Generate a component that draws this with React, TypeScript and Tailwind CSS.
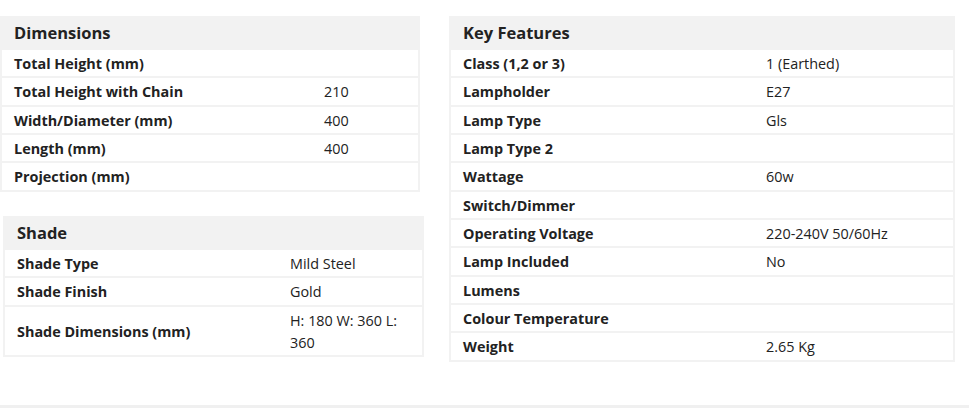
type Row = [string, string];

const dimensions: Row[] = [
  ["Total Height (mm)", ""],
  ["Total Height with Chain", "210"],
  ["Width/Diameter (mm)", "400"],
  ["Length (mm)", "400"],
  ["Projection (mm)", ""],
];

const shade: Row[] = [
  ["Shade Type", "Mild Steel"],
  ["Shade Finish", "Gold"],
  ["Shade Dimensions (mm)", "H: 180 W: 360 L: 360"],
];

const keyFeatures: Row[] = [
  ["Class (1,2 or 3)", "1 (Earthed)"],
  ["Lampholder", "E27"],
  ["Lamp Type", "Gls"],
  ["Lamp Type 2", ""],
  ["Wattage", "60w"],
  ["Switch/Dimmer", ""],
  ["Operating Voltage", "220-240V 50/60Hz"],
  ["Lamp Included", "No"],
  ["Lumens", ""],
  ["Colour Temperature", ""],
  ["Weight", "2.65 Kg"],
];

function SpecTable({
  title,
  rows,
  labelWidth,
  className,
}: {
  title: string;
  rows: Row[];
  labelWidth: string;
  className: string;
}) {
  return (
    <div className={`bg-[#f2f2f2] px-[2px] pb-[0.33px] ${className}`}>
      <div className="h-[34px] flex items-center px-[12px] pt-[1px] text-[16.5px] font-bold text-[#222]">
        {title}
      </div>
      {rows.map(([label, value]) => (
        <div
          key={label}
          className={`grid ${labelWidth} bg-white mb-[2px] min-h-[26.33px] items-center text-[14.4px] leading-[22px] text-[#222]`}
        >
          <div className="px-[12px] pt-[3px] pb-[1px] font-bold">{label}</div>
          <div className="px-[12px] pt-[3px] pb-[1px]">{value}</div>
        </div>
      ))}
    </div>
  );
}

export default function App() {
  return (
    <div className="w-[969px] bg-white" style={{ fontFamily: '"Open Sans", sans-serif' }}>
      <div className="h-[405px] pt-[16px] flex items-start">
        <div className="w-[449px] shrink-0">
          <SpecTable
            title="Dimensions"
            rows={dimensions}
            labelWidth="grid-cols-[310px_1fr]"
            className="w-[420px]"
          />
          <SpecTable
            title="Shade"
            rows={shade}
            labelWidth="grid-cols-[273px_1fr]"
            className="w-[421px] ml-[3px] mt-[24px]"
          />
        </div>
        <SpecTable
          title="Key Features"
          rows={keyFeatures}
          labelWidth="grid-cols-[303px_1fr]"
          className="w-[506px]"
        />
      </div>
      <div className="h-[3px] bg-[#f0f0f0]" />
    </div>
  );
}
